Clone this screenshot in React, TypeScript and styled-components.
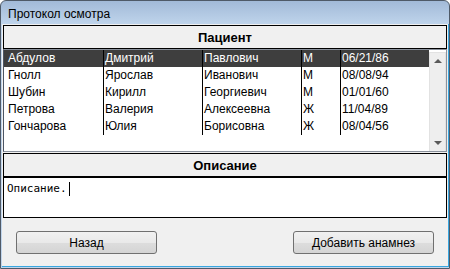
import React from "react";
import styled, { createGlobalStyle } from "styled-components";

const patients = [
  ["Абдулов", "Дмитрий", "Павлович", "М", "06/21/86"],
  ["Гнолл", "Ярослав", "Иванович", "М", "08/08/94"],
  ["Шубин", "Кирилл", "Георгиевич", "М", "01/01/60"],
  ["Петрова", "Валерия", "Алексеевна", "Ж", "11/04/89"],
  ["Гончарова", "Юлия", "Борисовна", "Ж", "08/04/56"],
];

const App = () => {
  return (
    <>
      <GlobalStyle />
      <Window>
        <TitleBar>Протокол осмотра</TitleBar>
        <Panel>
          <SectionHeader>Пациент</SectionHeader>
          <Grid>
            <Rows>
              {patients.map((p, i) => (
                <Row key={i} $selected={i === 0}>
                  {p.map((v, j) => (
                    <Cell key={j} $first={j === 0}>
                      {v}
                    </Cell>
                  ))}
                </Row>
              ))}
            </Rows>
            <ScrollBar>
              <ScrollButton>
                <Arrow $up />
              </ScrollButton>
              <ScrollButton>
                <Arrow />
              </ScrollButton>
            </ScrollBar>
          </Grid>
          <SectionHeader $spaced>Описание</SectionHeader>
          <Notes>
            Описание.
            <Caret />
          </Notes>
          <Footer>
            <Button>Назад</Button>
            <Button>Добавить анамнез</Button>
          </Footer>
        </Panel>
      </Window>
    </>
  );
};

export default App;

const GlobalStyle = createGlobalStyle`
  body {
    margin: 0;
    background: #ffffff;
    font-family: "Liberation Sans", Arial, sans-serif;
  }
`;

const Window = styled.div`
  width: 450px;
  height: 269px;
  box-sizing: border-box;
  border: 1px solid #4f5a68;
  border-radius: 6px 6px 0 0;
  background: linear-gradient(180deg, #a2bad8 0px, #c0d5ec 24px, #c0d5ec 100%);
  padding: 0 0 1px 1px;
  display: flex;
  flex-direction: column;
  overflow: hidden;
`;

const TitleBar = styled.div`
  height: 23px;
  flex: none;
  display: flex;
  align-items: center;
  padding: 2px 0 0 6px;
  box-sizing: border-box;
  font-size: 12px;
  color: #000;
`;

const Panel = styled.div`
  flex: 1;
  display: flex;
  flex-direction: column;
  background: #f0f0f0;
  border-right: 1px solid #38a6e0;
  border-bottom: 1px solid #38a6e0;
  padding: 1px 1px 0 1px;
  min-height: 0;
`;

const SectionHeader = styled.div<{ $spaced?: boolean }>`
  height: 24px;
  box-sizing: border-box;
  flex: none;
  border: 1px solid #000;
  background: #f0f0f0;
  display: flex;
  align-items: center;
  justify-content: center;
  font-weight: bold;
  font-size: 13px;
  margin-top: ${({ $spaced }) => ($spaced ? "1px" : "0")};
`;

const Grid = styled.div`
  height: 103px;
  box-sizing: border-box;
  flex: none;
  display: flex;
  background: #fff;
  border: 1px solid #8a919c;
  border-left-color: #4b5565;
`;

const Rows = styled.div`
  width: 425px;
  display: flex;
  flex-direction: column;
`;

const Row = styled.div<{ $selected?: boolean }>`
  display: grid;
  grid-template-columns: 99px 99px 99px 39px 89px;
  height: 17px;
  font-size: 12px;
  line-height: 17px;
  background: ${({ $selected }) => ($selected ? "#3e3e3e" : "#fff")};
  color: ${({ $selected }) => ($selected ? "#fff" : "#000")};
`;

const Cell = styled.div<{ $first?: boolean }>`
  padding-left: ${({ $first }) => ($first ? "4px" : "1px")};
  border-left: ${({ $first }) => ($first ? "none" : "1px solid #000")};
  white-space: nowrap;
  overflow: hidden;
`;

const ScrollBar = styled.div`
  width: 17px;
  margin-top: 2px;
  box-sizing: border-box;
  background: #eeeeee;
  border: 1px solid #e2e2e2;
  border-bottom: none;
  display: flex;
  flex-direction: column;
  justify-content: space-between;
`;

const ScrollButton = styled.div`
  height: 16px;
  display: flex;
  align-items: center;
  justify-content: center;
`;

const Arrow = styled.div<{ $up?: boolean }>`
  width: 0;
  height: 0;
  border-left: 4px solid transparent;
  border-right: 4px solid transparent;
  ${({ $up }) => ($up ? "border-bottom: 4px solid #5a5a5a;" : "border-top: 4px solid #5a5a5a;")}
`;

const Notes = styled.div`
  height: 41px;
  box-sizing: border-box;
  flex: none;
  border: 1px solid #000;
  background: #fff;
  padding: 2px 0 0 3px;
  font-family: "DejaVu Sans Mono", "Liberation Mono", monospace;
  font-size: 11px;
  line-height: 17px;
  display: flex;
  align-items: flex-start;
`;

const Caret = styled.span`
  display: inline-block;
  width: 1px;
  height: 14px;
  margin: 2px 0 0 2px;
  background: #000;
`;

const Footer = styled.div`
  display: flex;
  justify-content: space-between;
  padding: 13px 13px 0 13px;
`;

const Button = styled.button`
  width: 141px;
  height: 23px;
  box-sizing: border-box;
  border: 1px solid #707070;
  border-radius: 3px;
  background: linear-gradient(180deg, #f1f1f1 0%, #e9e9e9 50%, #dddddd 51%, #d4d4d4 100%);
  font-family: "Liberation Sans", Arial, sans-serif;
  font-size: 12px;
  color: #000;
  padding: 0;
`;
